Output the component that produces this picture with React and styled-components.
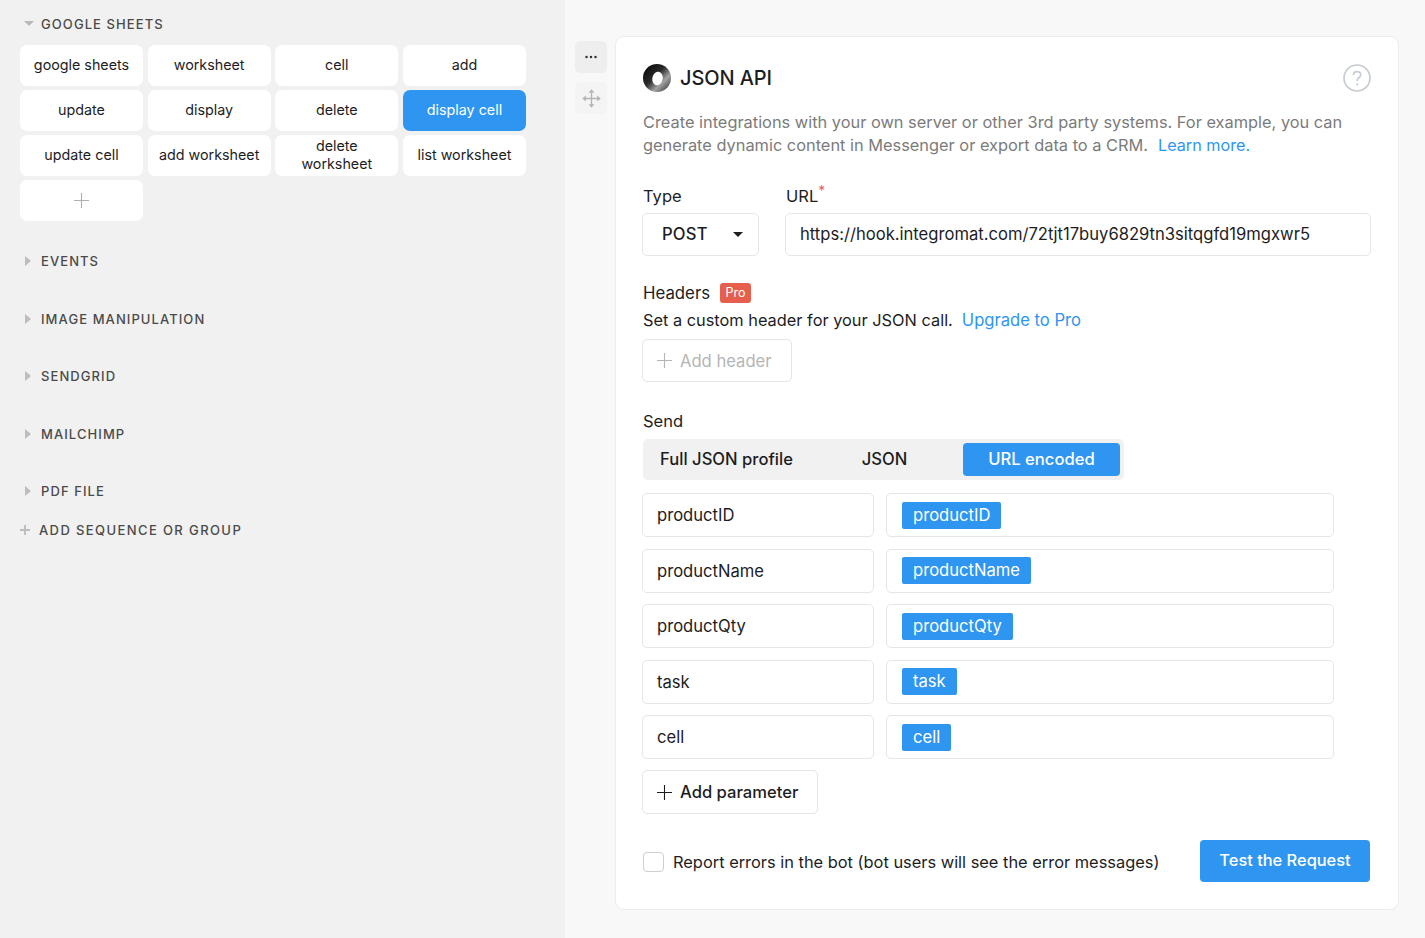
import styled, { createGlobalStyle } from "styled-components";
import { useId } from "react";

const GlobalStyle = createGlobalStyle`
  html, body {
    margin: 0;
    padding: 0;
    height: 100%;
    background: #f8f8f8;
    font-family: Inter, "Liberation Sans", sans-serif;
    color: #1d1d1f;
  }
  * { box-sizing: border-box; }
`;

const Page = styled.div`
  display: flex;
  width: 1425px;
  height: 938px;
  overflow: hidden;
`;

const Sidebar = styled.aside`
  width: 565px;
  flex: none;
  background: #f1f1f1;
  padding: 15px 39px 0 20px;
`;

const SectionHead = styled.div`
  display: flex;
  align-items: center;
  height: 17px;
  margin-top: ${(p) => p.$top || 0}px;
  font-size: 13px;
  font-weight: 500;
  letter-spacing: 1.08px;
  color: #4a4a4a;
`;

const Caret = styled.span`
  width: 21px;
  flex: none;
  display: flex;
  padding-left: ${(p) => (p.$open ? 4 : 5)}px;

  &::before {
    content: "";
    border-style: solid;
    border-color: transparent;
    ${(p) =>
      p.$open
        ? `border-width: 5px 5px 0 5px; border-top-color: #b9b9b9;`
        : `border-width: 5px 0 5px 6px; border-left-color: #bdbdbd;`}
  }
`;

const BlockGrid = styled.div`
  display: grid;
  grid-template-columns: repeat(4, 123px);
  grid-auto-rows: 41px;
  column-gap: 4.67px;
  row-gap: 4px;
  margin-top: 13px;
`;

const Block = styled.div`
  display: flex;
  align-items: center;
  justify-content: center;
  text-align: center;
  border-radius: 7px;
  padding: 0 10px 2px;
  background: ${(p) => (p.$active ? "#2e96f0" : "#fff")};
  color: ${(p) => (p.$active ? "#fff" : "#1d1d1f")};
  font-size: 14.3px;
  line-height: 18px;
`;

const AddBlock = styled(Block)`
  padding: 0;
`;

const AddSection = styled(SectionHead)`
  letter-spacing: 1.4px;
  gap: 9px;
`;

const Main = styled.main`
  flex: 1;
  display: flex;
  padding: 36px 26px 28px 10px;
  gap: 8px;
`;

const SideTools = styled.div`
  width: 32px;
  flex: none;
  padding-top: 5px;
  display: flex;
  flex-direction: column;
  gap: 9px;
`;

const ToolButton = styled.div`
  width: 32px;
  height: 32px;
  border-radius: 5px;
  display: flex;
  align-items: center;
  justify-content: center;
  background: ${(p) => (p.$faded ? "#f4f4f4" : "#eeeeee")};
`;

const Card = styled.section`
  width: 784px;
  height: 874px;
  background: #fff;
  border: 1px solid #ececec;
  border-radius: 9px;
  padding: 26px 27px 0;
`;

const TitleRow = styled.div`
  display: flex;
  align-items: center;
  height: 30px;
`;

const Title = styled.h1`
  margin: 0 0 0 9px;
  flex: 1;
  font-size: 20px;
  font-weight: 550;
  letter-spacing: -0.1px;
  color: #1d1d1f;
`;

const Description = styled.p`
  margin: 18px 0 0;
  font-size: 16.36px;
  line-height: 23px;
  color: #7b7b7b;
`;

const Link = styled.a`
  color: #2e96f0;
  text-decoration: none;
  font-size: ${(p) => p.$size || 16.36}px;
  margin-left: ${(p) => p.$gap || 0}px;
`;

const TypeUrlRow = styled.div`
  display: grid;
  grid-template-columns: 117px 586px;
  column-gap: 26px;
  margin: 27px 0 0 -1px;
`;

const Label = styled.label`
  display: block;
  height: 29px;
  padding-left: 1px;
  font-size: 16.5px;
  line-height: 24px;
  color: #1d1d1f;

  sup {
    color: #e8604c;
    font-size: 14px;
    line-height: 0;
  }
`;

const Field = styled.div`
  height: ${(p) => p.$height || 43}px;
  border: 1px solid #e6e6e6;
  border-radius: 5px;
  background: #fff;
  display: flex;
  align-items: center;
  padding: 0 14px;
  font-size: 16.6px;
  color: #1d1d1f;
`;

const UrlField = styled(Field)`
  padding-bottom: 1px;
`;

const Select = styled(Field)`
  justify-content: space-between;
  padding: 0 15px 2px 19px;
  font-weight: 500;
  letter-spacing: 0.2px;

  &::after {
    content: "";
    margin-top: 2px;
    border-style: solid;
    border-width: 5px 5px 0 5px;
    border-color: #1d1d1f transparent transparent;
  }
`;

const HeadersRow = styled.div`
  display: flex;
  align-items: center;
  gap: 10px;
  height: 24px;
  margin-top: 25px;
  font-size: 16.8px;
`;

const ProBadge = styled.span`
  background: #e55f4c;
  color: #fff;
  font-size: 12.5px;
  line-height: 20px;
  height: 20px;
  padding: 0 5.5px;
  border-radius: 3px;
`;

const HelpText = styled.div`
  margin-top: 3px;
  font-size: 16.35px;
  line-height: 24px;
`;

const GhostButton = styled.div`
  display: inline-flex;
  align-items: center;
  gap: 8px;
  height: ${(p) => p.$height || 43}px;
  margin-left: -1px;
  padding: 0 19px 0 14px;
  border: 1px solid #e6e6e6;
  border-radius: 5px;
  font-size: 16.6px;
  font-weight: ${(p) => (p.$disabled ? 400 : 500)};
  color: ${(p) => (p.$disabled ? "#b5b5b5" : "#1d1d1f")};
`;

const HeaderButtonWrap = styled.div`
  margin-top: 7px;
  height: 43px;
`;

const SendLabel = styled(Label)`
  height: 24px;
  margin-top: 27px;
  padding-left: 0;
`;

const Tabs = styled.div`
  display: grid;
  grid-template-columns: 159px 157px 157px;
  width: 481px;
  height: 41px;
  margin-top: 6px;
  padding: 4px;
  background: #f1f1f1;
  border-radius: 5px;
`;

const Tab = styled.div`
  display: flex;
  align-items: center;
  justify-content: center;
  padding-bottom: 1px;
  font-size: 16.6px;
  font-weight: 500;
  border-radius: 4px;
  background: ${(p) => (p.$active ? "#2e96f0" : "transparent")};
  color: ${(p) => (p.$active ? "#fff" : "#1d1d1f")};
`;

const ParamList = styled.div`
  display: flex;
  flex-direction: column;
  gap: 11.5px;
  margin: 13px 0 0 -1px;
`;

const ParamRow = styled.div`
  display: grid;
  grid-template-columns: 232px 448px;
  column-gap: 12px;
`;

const Token = styled.span`
  background: #2e96f0;
  color: #fff;
  border-radius: 2px;
  height: 27px;
  line-height: 27px;
  padding: 0 11px;
  margin-left: 1px;
`;

const AddParamWrap = styled.div`
  margin-top: 11px;
  height: 44px;
`;

const Footer = styled.div`
  display: flex;
  align-items: center;
  justify-content: space-between;
  margin: 26px 1px 0 0;
  height: 42px;
`;

const CheckRow = styled.div`
  display: flex;
  align-items: center;
  gap: 9px;
  font-size: 16.4px;
  padding-top: 2px;
`;

const Check = styled.span`
  width: 21px;
  height: 20px;
  border: 1px solid #cfcfcf;
  border-radius: 4px;
  background: #fff;
`;

const PrimaryButton = styled.div`
  width: 170px;
  height: 42px;
  border-radius: 4px;
  background: #2e96f0;
  color: #fff;
  display: flex;
  align-items: center;
  justify-content: center;
  padding-bottom: 2px;
  font-size: 16.4px;
  font-weight: 500;
`;

const PlusIcon = ({ size = 15, color = "#1d1d1f", weight = 1.1 }) => (
  <svg width={size} height={size} viewBox="0 0 15 15">
    <path d="M7.5 0v15M0 7.5h15" stroke={color} strokeWidth={weight} fill="none" />
  </svg>
);

const DotsIcon = () => (
  <svg width="14" height="4" viewBox="0 0 14 4">
    <circle cx="2.5" cy="2" r="1.25" fill="#333" />
    <circle cx="7" cy="2" r="1.25" fill="#333" />
    <circle cx="11.5" cy="2" r="1.25" fill="#333" />
  </svg>
);

const MoveIcon = () => (
  <svg width="19" height="19" viewBox="0 0 19 19" fill="none">
    <path d="M9.5 2v15M2 9.5h15" stroke="#b4b4b4" strokeWidth="1.3" />
    <path d="M9.5 0.3 12.4 3.8H6.6zM9.5 18.7 6.6 15.2h5.8zM0.3 9.5 3.8 6.6v5.8zM18.7 9.5 15.2 12.4V6.6z" fill="#b4b4b4" />
  </svg>
);

const HelpIcon = () => (
  <svg width="28" height="28" viewBox="0 0 28 28" fill="none">
    <circle cx="14" cy="14" r="13" stroke="#c6ccd1" strokeWidth="1.7" />
    <path d="M10.4 11.2c0-2.2 1.6-3.5 3.7-3.5 2.1 0 3.6 1.3 3.6 3.1 0 1.4-.8 2.2-1.9 3-1.1.8-1.6 1.3-1.6 2.6v.5" stroke="#c6ccd1" strokeWidth="1.7" />
    <circle cx="14.2" cy="20.4" r="1.1" fill="#c6ccd1" />
  </svg>
);

const JsonLogo = () => {
  const id = useId();
  return (
    <svg width="28" height="28" viewBox="0 0 28 28">
      <defs>
        <linearGradient id={id} x1="0.05" y1="0.15" x2="0.85" y2="0.95">
          <stop offset="0" stopColor="#0c0c0c" />
          <stop offset="0.42" stopColor="#2a2a2a" />
          <stop offset="0.72" stopColor="#a3a3a3" />
          <stop offset="0.9" stopColor="#6a6a6a" />
          <stop offset="1" stopColor="#333" />
        </linearGradient>
      </defs>
      <circle cx="14" cy="14" r="14" fill={`url(#${id})`} />
      <ellipse cx="14.5" cy="14.5" rx="5.2" ry="6.8" transform="rotate(12 14.5 14.5)" fill="#fff" />
    </svg>
  );
};

const blocks = [
  "google sheets", "worksheet", "cell", "add",
  "update", "display", "delete", "display cell",
  "update cell", "add worksheet", "delete worksheet", "list worksheet",
];

const sections = [
  ["EVENTS", 31],
  ["IMAGE MANIPULATION", 41],
  ["SENDGRID", 40],
  ["MAILCHIMP", 41],
  ["PDF FILE", 40],
];

const params = ["productID", "productName", "productQty", "task", "cell"];

export default function App() {
  return (
    <Page>
      <GlobalStyle />
      <Sidebar>
        <SectionHead>
          <Caret $open />
          GOOGLE SHEETS
        </SectionHead>
        <BlockGrid>
          {blocks.map((b) => (
            <Block key={b} $active={b === "display cell"}>{b}</Block>
          ))}
          <AddBlock><PlusIcon size={15} color="#b0b0b0" /></AddBlock>
        </BlockGrid>
        {sections.map(([name, top]) => (
          <SectionHead key={name} $top={top}>
            <Caret />
            {name}
          </SectionHead>
        ))}
        <AddSection $top={22}>
          <PlusIcon size={10} color="#bdbdbd" weight={2.8} />
          ADD SEQUENCE OR GROUP
        </AddSection>
      </Sidebar>
      <Main>
        <SideTools>
          <ToolButton><DotsIcon /></ToolButton>
          <ToolButton $faded><MoveIcon /></ToolButton>
        </SideTools>
        <Card>
          <TitleRow>
            <JsonLogo />
            <Title>JSON API</Title>
            <HelpIcon />
          </TitleRow>
          <Description>
            Create integrations with your own server or other 3rd party systems. For example, you can
            <br />
            generate dynamic content in Messenger or export data to a CRM.
            <Link $gap={10} $size={16.2}>Learn more.</Link>
          </Description>
          <TypeUrlRow>
            <div>
              <Label>Type</Label>
              <Select>POST</Select>
            </div>
            <div>
              <Label>URL<sup>*</sup></Label>
              <UrlField>https://hook.integromat.com/72tjt17buy6829tn3sitqgfd19mgxwr5</UrlField>
            </div>
          </TypeUrlRow>
          <HeadersRow>
            Headers
            <ProBadge>Pro</ProBadge>
          </HeadersRow>
          <HelpText>
            Set a custom header for your JSON call.
            <Link $gap={9} $size={16.6}>Upgrade to Pro</Link>
          </HelpText>
          <HeaderButtonWrap>
            <GhostButton $disabled>
              <PlusIcon color="#b5b5b5" />
              Add header
            </GhostButton>
          </HeaderButtonWrap>
          <SendLabel>Send</SendLabel>
          <Tabs>
            <Tab>Full JSON profile</Tab>
            <Tab>JSON</Tab>
            <Tab $active>URL encoded</Tab>
          </Tabs>
          <ParamList>
            {params.map((p) => (
              <ParamRow key={p}>
                <Field $height={44}>{p}</Field>
                <Field $height={44}><Token>{p}</Token></Field>
              </ParamRow>
            ))}
          </ParamList>
          <AddParamWrap>
            <GhostButton $height={44}>
              <PlusIcon />
              Add parameter
            </GhostButton>
          </AddParamWrap>
          <Footer>
            <CheckRow>
              <Check />
              Report errors in the bot (bot users will see the error messages)
            </CheckRow>
            <PrimaryButton>Test the Request</PrimaryButton>
          </Footer>
        </Card>
      </Main>
    </Page>
  );
}
